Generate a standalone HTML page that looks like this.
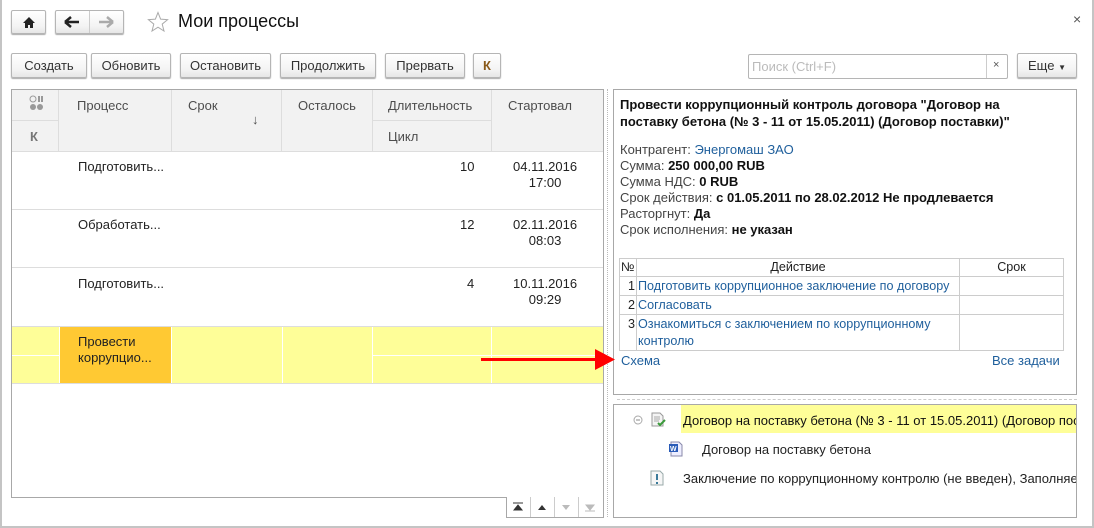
<!DOCTYPE html>
<html><head><meta charset="utf-8">
<style>
*{box-sizing:border-box;margin:0;padding:0}
body{width:1094px;height:528px;overflow:hidden;background:#fff;font-family:"Liberation Sans",Arial,sans-serif;font-size:13px;color:#333;position:relative}
.a{position:absolute}
.frame{left:0;top:0;width:1094px;height:528px;border-left:2px solid #c4c4c4;border-bottom:2px solid #c4c4c4;border-right:2px solid #c4c4c4}
.btn{position:absolute;height:25px;border:1px solid #b5b5b5;border-radius:2px;background:linear-gradient(#fff,#f3f3f3 70%,#e6e6e6);box-shadow:0 1px 1px #aaa;text-align:center;line-height:23px;color:#333;font-size:13px}
.hd{position:absolute;background:#f2f2f2;border-right:1px solid #ddd;border-bottom:1px solid #ddd;color:#4d4d4d;padding:8px 0 0 18px}
.t{position:absolute;color:#222}
.bl{color:#1f5f9c}
b{color:#111}
.tb td{border:1px solid #ccc;white-space:nowrap;overflow:hidden}
</style></head><body>
<div class="a frame"></div>
<div class="btn" style="left:11px;top:10px;width:35px;height:24px"><svg width="14" height="13" viewBox="0 0 14 13" style="margin-top:5px"><path d="M7 1L1 7h2v5h3V9h2v3h3V7h2z" fill="#222"/></svg></div>
<div class="btn" style="left:55px;top:10px;width:69px;height:24px"></div>
<div class="a" style="left:89px;top:11px;width:1px;height:22px;background:#ccc"></div>
<svg class="a" style="left:64px;top:15px" width="16" height="14"><path d="M1 7h14M1 7l6-5M1 7l6 5" stroke="#222" stroke-width="2.5" fill="none"/></svg>
<svg class="a" style="left:98px;top:15px" width="16" height="14"><path d="M15 7H1M15 7l-6-5M15 7l-6 5" stroke="#aaa" stroke-width="2.5" fill="none"/></svg>
<svg class="a" style="left:147px;top:11px" width="22" height="22" viewBox="0 0 22 22"><path d="M11 1.5l2.6 6.6 7 .5-5.4 4.5 1.8 6.9L11 16.2 5 20l1.8-6.9L1.4 8.6l7-.5z" fill="none" stroke="#aaa" stroke-width="1"/></svg>
<div class="t" style="left:178px;top:11px;font-size:18px;color:#111">Мои процессы</div>
<div class="t" style="left:1073px;top:11px;font-size:14px;color:#555">×</div>

<div class="btn" style="left:11px;top:53px;width:76px">Создать</div>
<div class="btn" style="left:91px;top:53px;width:80px">Обновить</div>
<div class="btn" style="left:180px;top:53px;width:91px">Остановить</div>
<div class="btn" style="left:280px;top:53px;width:96px">Продолжить</div>
<div class="btn" style="left:385px;top:53px;width:80px">Прервать</div>
<div class="btn" style="left:473px;top:53px;width:28px;color:#8a5a1a;font-weight:bold">К</div>
<div class="a" style="left:748px;top:54px;width:260px;height:25px;border:1px solid #b5b5b5;border-radius:2px"></div>
<div class="t" style="left:752px;top:59px;color:#bbb">Поиск (Ctrl+F)</div>
<div class="a" style="left:986px;top:55px;width:1px;height:23px;background:#ccc"></div>
<div class="t" style="left:993px;top:59px;font-size:11px;color:#555">×</div>
<div class="btn" style="left:1017px;top:53px;width:60px">Еще <span style="font-size:8px">▼</span></div>

<!-- left table -->
<div class="a" style="left:11px;top:89px;width:593px;height:409px;border:1px solid #a8a8a8"></div>
<div class="a" style="left:12px;top:90px;width:591px;height:62px;background:#f2f2f2;border-bottom:1px solid #ddd"></div>
<div class="hd" style="left:12px;top:90px;width:47px;height:31px;padding:0"><svg width="20" height="18" style="margin:5px 0 0 16px"><circle cx="5" cy="4" r="3" fill="none" stroke="#999"/><rect x="10" y="1" width="2" height="6" fill="#999"/><rect x="13" y="1" width="2" height="6" fill="#999"/><circle cx="5" cy="12" r="3" fill="#999"/><circle cx="12" cy="12" r="3" fill="#999"/></svg></div>
<div class="hd" style="left:12px;top:121px;width:47px;height:31px;padding:8px 0 0 18px;font-weight:bold;color:#777">К</div>
<div class="hd" style="left:59px;top:90px;width:113px;height:62px">Процесс</div>
<div class="hd" style="left:172px;top:90px;width:110px;height:62px;padding-left:16px">Срок<span style="position:absolute;left:80px;top:22px">↓</span></div>
<div class="hd" style="left:282px;top:90px;width:91px;height:62px;padding-left:16px">Осталось</div>
<div class="hd" style="left:373px;top:90px;width:119px;height:31px;padding-left:15px">Длительность</div>
<div class="hd" style="left:373px;top:121px;width:119px;height:31px;padding-left:15px">Цикл</div>
<div class="hd" style="left:492px;top:90px;width:111px;height:62px;padding-left:16px;border-right:0">Стартовал</div>

<div class="a" style="left:12px;top:209px;width:591px;height:1px;background:#ddd"></div>
<div class="a" style="left:12px;top:267px;width:591px;height:1px;background:#ddd"></div>
<div class="a" style="left:12px;top:326px;width:591px;height:58px;background:#fefe98;border-top:1px solid #ddd;border-bottom:1px solid #ddd"></div>
<div class="a" style="left:12px;top:355px;width:47px;height:1px;background:#fff"></div>
<div class="a" style="left:373px;top:355px;width:230px;height:1px;background:#fff"></div>
<div class="a" style="left:59px;top:327px;width:1px;height:56px;background:#fff"></div>
<div class="a" style="left:171px;top:327px;width:1px;height:56px;background:#fff"></div>
<div class="a" style="left:282px;top:327px;width:1px;height:56px;background:#fff"></div>
<div class="a" style="left:372px;top:327px;width:1px;height:56px;background:#fff"></div>
<div class="a" style="left:491px;top:327px;width:1px;height:56px;background:#fff"></div>
<div class="a" style="left:60px;top:327px;width:111px;height:56px;background:#ffc933"></div>

<div class="t" style="left:78px;top:159px">Подготовить...</div>
<div class="t" style="left:460px;top:159px">10</div>
<div class="t" style="left:513px;top:159px;text-align:center;line-height:16px">04.11.2016<br>17:00</div>
<div class="t" style="left:78px;top:217px">Обработать...</div>
<div class="t" style="left:460px;top:217px">12</div>
<div class="t" style="left:513px;top:217px;text-align:center;line-height:16px">02.11.2016<br>08:03</div>
<div class="t" style="left:78px;top:276px">Подготовить...</div>
<div class="t" style="left:467px;top:276px">4</div>
<div class="t" style="left:513px;top:276px;text-align:center;line-height:16px">10.11.2016<br>09:29</div>
<div class="t" style="left:78px;top:334px;line-height:16px">Провести<br>коррупцио...</div>

<div class="a" style="left:506px;top:497px;width:98px;height:21px;border:1px solid #a8a8a8;border-top:0;background:#fff"></div>
<div class="a" style="left:530px;top:497px;width:1px;height:20px;background:#ccc"></div>
<div class="a" style="left:554px;top:497px;width:1px;height:20px;background:#ccc"></div>
<div class="a" style="left:578px;top:497px;width:1px;height:20px;background:#ccc"></div>
<svg class="a" style="left:512px;top:502px" width="88" height="10"><path d="M1 1h10M2 8l4-5 4 5z" stroke="#333" fill="#333"/><path d="M26 8l4-5 4 5z" fill="#333"/><path d="M50 3l4 5 4-5z" fill="#bbb"/><path d="M74 3l4 5 4-5zM73 9h10" stroke="#bbb" fill="#bbb"/></svg>

<div class="a" style="left:607px;top:89px;width:1px;height:428px;border-left:1px dotted #bbb"></div>

<!-- right panel -->
<div class="a" style="left:613px;top:89px;width:464px;height:306px;border:1px solid #a8a8a8"></div>
<div class="t" style="left:620px;top:96px;font-weight:bold;line-height:17px;color:#111">Провести коррупционный контроль договора "Договор на<br>поставку бетона (№ 3 - 11 от 15.05.2011) (Договор поставки)"</div>
<div class="t" style="left:620px;top:142px;line-height:16px;color:#444">Контрагент: <span class="bl">Энергомаш ЗАО</span><br>Сумма: <b>250 000,00 RUB</b><br>Сумма НДС: <b>0 RUB</b><br>Срок действия: <b>с 01.05.2011 по 28.02.2012 Не продлевается</b><br>Расторгнут: <b>Да</b><br>Срок исполнения: <b>не указан</b></div>

<table class="a tb" style="left:619px;top:258px;width:444px;border-collapse:collapse;table-layout:fixed;font-size:12.6px;line-height:17px">
<colgroup><col style="width:17px"><col style="width:323px"><col style="width:104px"></colgroup>
<tr><td style="padding-left:1px;color:#222">№</td><td style="text-align:center;color:#222">Действие</td><td style="text-align:center;color:#222">Срок</td></tr>
<tr><td style="text-align:right;padding:1px 1px 0 0;color:#222">1</td><td class="bl" style="padding:1px 0 0 1px">Подготовить коррупционное заключение по договору</td><td></td></tr>
<tr><td style="text-align:right;padding:1px 1px 0 0;color:#222">2</td><td class="bl" style="padding:1px 0 0 1px">Согласовать</td><td></td></tr>
<tr><td style="text-align:right;padding:1px 1px 0 0;vertical-align:top;color:#222">3</td><td class="bl" style="padding:1px 0 0 1px">Ознакомиться с заключением по коррупционному<br>контролю</td><td></td></tr>
</table>
<div class="t bl" style="left:621px;top:353px">Схема</div>
<div class="t bl" style="left:992px;top:353px">Все задачи</div>

<div class="a" style="left:481px;top:358px;width:116px;height:3px;background:#f00"></div>
<svg class="a" style="left:595px;top:349px" width="20" height="21"><path d="M0 0L20 10.5 0 21z" fill="#f00"/></svg>

<div class="a" style="left:617px;top:399px;width:460px;height:1px;border-top:1px dashed #ccc"></div>
<div class="a" style="left:613px;top:404px;width:464px;height:114px;border:1px solid #a8a8a8"></div>
<div class="a" style="left:681px;top:405px;width:395px;height:28px;background:#fefe98"></div>
<svg class="a" style="left:633px;top:415px" width="10" height="10"><circle cx="5" cy="5" r="4" fill="none" stroke="#aaa"/><path d="M3 5h4" stroke="#888"/></svg>
<svg class="a" style="left:651px;top:412px" width="16" height="16"><path d="M1 1h8l3 3v10H1z" fill="#f4f4f4" stroke="#999"/><path d="M3 5h6M3 7h6M3 9h5" stroke="#aaa"/><path d="M7 11l2 2 5-5" stroke="#3a9a3a" stroke-width="2" fill="none"/></svg>
<div class="t" style="left:683px;top:413px;color:#111;white-space:nowrap;width:393px;overflow:hidden">Договор на поставку бетона (№ 3 - 11 от 15.05.2011) (Договор поставки)</div>
<svg class="a" style="left:668px;top:441px" width="16" height="16"><path d="M3 1h8l3 3v11H3z" fill="#eef" stroke="#88a"/><rect x="1" y="3" width="9" height="8" fill="#2a5bb8"/><text x="2" y="10" font-size="7" fill="#fff" font-family="Liberation Sans" font-weight="bold">W</text></svg>
<div class="t" style="left:702px;top:442px">Договор на поставку бетона</div>
<svg class="a" style="left:650px;top:470px" width="14" height="16"><path d="M1 1h9l3 3v11H1z" fill="#f6f6f6" stroke="#9aa"/><path d="M7 4v6M7 12v2" stroke="#3a7a9a" stroke-width="2"/></svg>
<div class="t" style="left:683px;top:471px;white-space:nowrap;width:393px;overflow:hidden">Заключение по коррупционному контролю (не введен), Заполняется</div>
</body></html>
